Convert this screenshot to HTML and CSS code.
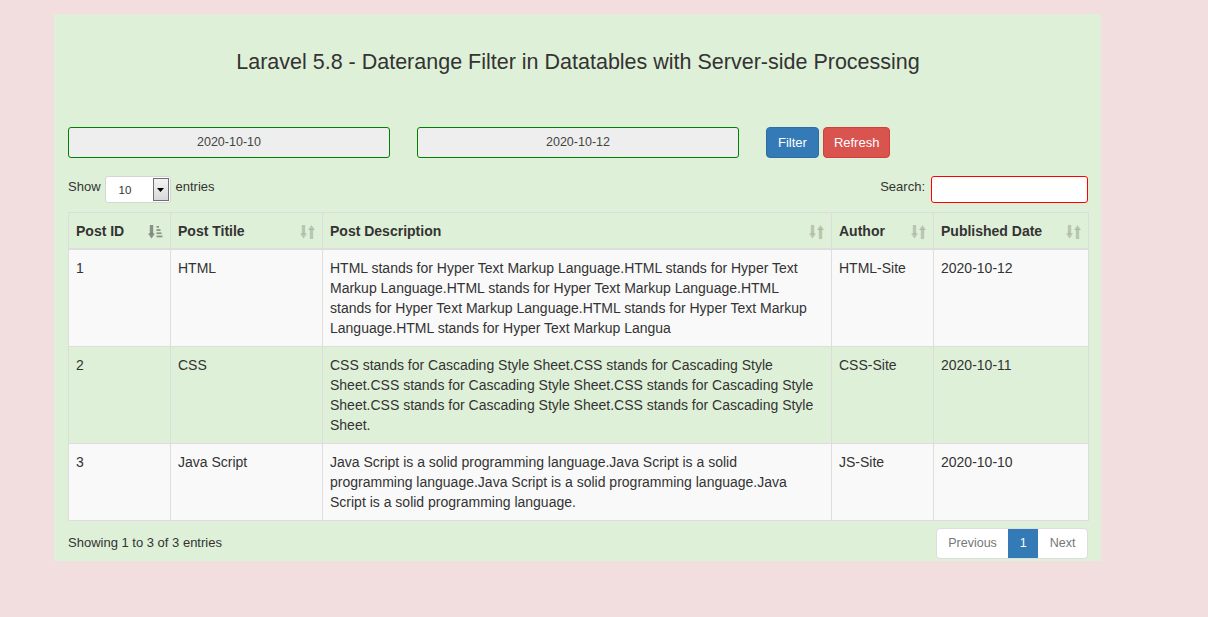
FILE: index.html
```html
<!DOCTYPE html>
<html>
<head>
<meta charset="utf-8">
<title>Laravel 5.8 - Daterange Filter</title>
<link rel="stylesheet" href="styles.css">
</head>
<body>
<div class="container">
  <h3 class="title">Laravel 5.8 - Daterange Filter in Datatables with Server-side Processing</h3>
  <div class="filter-row">
    <div class="date-input">2020-10-10</div>
    <div class="date-input second">2020-10-12</div>
    <button class="btn btn-primary">Filter</button>
    <button class="btn btn-danger">Refresh</button>
  </div>
  <div class="controls">
    <div class="length">
      <span class="lbl">Show</span>
      <div class="select"><span class="select-val">10</span><span class="select-btn"><svg width="7" height="4" viewBox="0 0 7 4"><polygon points="0,0 7,0 3.5,4" fill="#000"/></svg></span></div>
      <span class="lbl">entries</span>
    </div>
    <div class="search">
      <span class="lbl">Search:</span>
      <div class="search-input"></div>
    </div>
  </div>
  <table class="data">
    <colgroup>
      <col class="c1"><col class="c2"><col class="c3"><col class="c4"><col class="c5">
    </colgroup>
    <thead>
      <tr>
        <th>Post ID<svg class="sort active" width="15" height="14" viewBox="0 0 15 14"><rect x="1.8" y="0" width="3.4" height="9" /><polygon points="0,8.5 7,8.5 3.5,13.5"/><rect x="8.5" y="1" width="2.5" height="1.7"/><rect x="8.5" y="4.2" width="4" height="1.7"/><rect x="8.5" y="7.4" width="5" height="1.7"/><rect x="8.5" y="10.6" width="6" height="1.7"/></svg></th>
        <th>Post Titile<svg class="sort" width="15" height="14" viewBox="0 0 15 14"><rect x="1.8" y="0" width="3.4" height="9"/><polygon points="0,8.5 7,8.5 3.5,13.5"/><rect x="9.8" y="4.5" width="3.4" height="9.5"/><polygon points="8,5 15,5 11.5,0"/></svg></th>
        <th>Post Description<svg class="sort" width="15" height="14" viewBox="0 0 15 14"><rect x="1.8" y="0" width="3.4" height="9"/><polygon points="0,8.5 7,8.5 3.5,13.5"/><rect x="9.8" y="4.5" width="3.4" height="9.5"/><polygon points="8,5 15,5 11.5,0"/></svg></th>
        <th>Author<svg class="sort" width="15" height="14" viewBox="0 0 15 14"><rect x="1.8" y="0" width="3.4" height="9"/><polygon points="0,8.5 7,8.5 3.5,13.5"/><rect x="9.8" y="4.5" width="3.4" height="9.5"/><polygon points="8,5 15,5 11.5,0"/></svg></th>
        <th>Published Date<svg class="sort" width="15" height="14" viewBox="0 0 15 14"><rect x="1.8" y="0" width="3.4" height="9"/><polygon points="0,8.5 7,8.5 3.5,13.5"/><rect x="9.8" y="4.5" width="3.4" height="9.5"/><polygon points="8,5 15,5 11.5,0"/></svg></th>
      </tr>
    </thead>
    <tbody>
      <tr class="odd">
        <td>1</td>
        <td>HTML</td>
        <td>HTML stands for Hyper Text Markup Language.HTML stands for Hyper Text Markup Language.HTML stands for Hyper Text Markup Language.HTML stands for Hyper Text Markup Language.HTML stands for Hyper Text Markup Language.HTML stands for Hyper Text Markup Langua</td>
        <td>HTML-Site</td>
        <td>2020-10-12</td>
      </tr>
      <tr class="even">
        <td>2</td>
        <td>CSS</td>
        <td>CSS stands for Cascading Style Sheet.CSS stands for Cascading Style Sheet.CSS stands for Cascading Style Sheet.CSS stands for Cascading Style Sheet.CSS stands for Cascading Style Sheet.CSS stands for Cascading Style Sheet.</td>
        <td>CSS-Site</td>
        <td>2020-10-11</td>
      </tr>
      <tr class="odd">
        <td>3</td>
        <td>Java Script</td>
        <td>Java Script is a solid programming language.Java Script is a solid programming language.Java Script is a solid programming language.Java Script is a solid programming language.</td>
        <td>JS-Site</td>
        <td>2020-10-10</td>
      </tr>
    </tbody>
  </table>
  <div class="footer">
    <div class="info">Showing 1 to 3 of 3 entries</div>
    <ul class="pagination">
      <li class="page disabled">Previous</li>
      <li class="page current">1</li>
      <li class="page disabled">Next</li>
    </ul>
  </div>
</div>
</body>
</html>
```

FILE: styles.css
```css
html, body {
  margin: 0;
  padding: 0;
}
body {
  background: #f2dede;
  font-family: "Liberation Sans", Arial, Helvetica, sans-serif;
  color: #333;
  font-size: 14px;
  line-height: 20px;
}
.container {
  margin: 14px 0 0 54px;
  width: 1047px;
  box-sizing: border-box;
  padding: 0 13px 2px 14px;
  background: #dff0d8;
}
.title {
  margin: 0;
  padding-top: 37px;
  font-size: 21.5px;
  line-height: 22px;
  font-weight: normal;
  text-align: center;
  color: #333;
}
.filter-row {
  display: flex;
  margin-top: 54px;
  height: 31px;
}
.date-input {
  width: 322px;
  height: 31px;
  box-sizing: border-box;
  border: 1px solid #008000;
  border-radius: 3px;
  background: #eeeeee;
  color: #444;
  font-size: 12.5px;
  line-height: 29px;
  text-align: center;
}
.date-input.second {
  margin-left: 27px;
}
.btn {
  height: 31px;
  box-sizing: border-box;
  padding: 0 11px;
  border: 1px solid transparent;
  border-radius: 4px;
  font-family: "Liberation Sans", Arial, sans-serif;
  font-size: 13px;
  line-height: 28px;
  color: #fff;
}
.btn-primary {
  margin-left: 27px;
  background: #337ab7;
  border-color: #2e6da4;
}
.btn-danger {
  margin-left: 4px;
  padding: 0 10px;
  background: #d9534f;
  border-color: #d43f3a;
}
.controls {
  display: flex;
  justify-content: space-between;
  align-items: flex-start;
  margin-top: 18px;
  height: 27px;
  font-size: 13px;
}
.length, .search {
  display: flex;
  align-items: flex-start;
}
.lbl {
  line-height: 22px;
}
.select {
  display: flex;
  margin: 0 5px 0 4px;
  width: 66px;
  height: 27px;
  box-sizing: border-box;
  border: 1px solid #d5d5d5;
  border-radius: 3px;
  background: #fff;
  padding: 1px;
}
.select-val {
  flex: 1;
  padding-left: 12px;
  font-size: 11.5px;
  line-height: 25px;
  color: #333;
}
.select-btn {
  width: 16px;
  box-sizing: border-box;
  border: 1px solid #6f6f6f;
  background: linear-gradient(#f4f4f4, #d8d8d8);
  display: flex;
  align-items: center;
  justify-content: center;
}
.search-input {
  margin-left: 6px;
  width: 157px;
  height: 27px;
  box-sizing: border-box;
  border: 1px solid #ff0000;
  border-radius: 3px;
  background: #fff;
}
.data {
  margin-top: 9px;
  width: 1020px;
  border-collapse: collapse;
  table-layout: fixed;
}
.c1 { width: 102px; }
.c2 { width: 152px; }
.c3 { width: 509px; }
.c4 { width: 102px; }
.c5 { width: 155px; }
.data th, .data td {
  border: 1px solid #ddd;
  text-align: left;
  vertical-align: top;
}
.data th {
  position: relative;
  padding: 8px 30px 7px 7px;
  font-weight: bold;
  border-bottom-width: 2px;
}
.data td {
  padding: 8px 8px 8px 7px;
}
.sort {
  position: absolute;
  right: 7px;
  top: 12px;
  fill: rgba(51, 51, 51, 0.22);
}
.sort.active {
  fill: rgba(51, 51, 51, 0.5);
}
.data tr.odd td {
  background: #f9f9f9;
}
.footer {
  display: flex;
  justify-content: space-between;
  align-items: center;
  margin-top: 7px;
  height: 31px;
}
.info {
  font-size: 13px;
  margin-top: -1px;
}
.pagination {
  display: flex;
  margin: 0;
  padding: 0;
  list-style: none;
  height: 31px;
  box-sizing: border-box;
  border: 1px solid #ddd;
  border-radius: 4px;
  background: #fff;
  overflow: hidden;
}
.page {
  padding: 0 11.5px;
  font-size: 12.5px;
  line-height: 29px;
  color: #777;
}
.page.current {
  background: #337ab7;
  color: #fff;
}
```
